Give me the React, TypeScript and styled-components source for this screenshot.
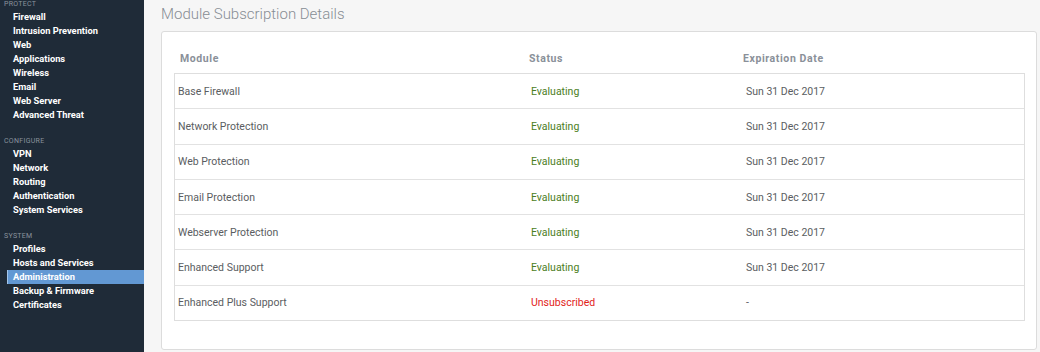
import React from "react";
import styled, { createGlobalStyle } from "styled-components";

const GlobalStyle = createGlobalStyle`
  html, body {
    margin: 0;
    padding: 0;
    background: #f6f6f6;
    font-family: Roboto, "Liberation Sans", sans-serif;
  }
`;

type Section = { title: string; items: string[] };

const sections: Section[] = [
  {
    title: "PROTECT",
    items: [
      "Firewall",
      "Intrusion Prevention",
      "Web",
      "Applications",
      "Wireless",
      "Email",
      "Web Server",
      "Advanced Threat",
    ],
  },
  {
    title: "CONFIGURE",
    items: ["VPN", "Network", "Routing", "Authentication", "System Services"],
  },
  {
    title: "SYSTEM",
    items: [
      "Profiles",
      "Hosts and Services",
      "Administration",
      "Backup & Firmware",
      "Certificates",
    ],
  },
];

type Status = "ok" | "none";

const modules: { name: string; status: string; kind: Status; date: string }[] = [
  { name: "Base Firewall", status: "Evaluating", kind: "ok", date: "Sun 31 Dec 2017" },
  { name: "Network Protection", status: "Evaluating", kind: "ok", date: "Sun 31 Dec 2017" },
  { name: "Web Protection", status: "Evaluating", kind: "ok", date: "Sun 31 Dec 2017" },
  { name: "Email Protection", status: "Evaluating", kind: "ok", date: "Sun 31 Dec 2017" },
  { name: "Webserver Protection", status: "Evaluating", kind: "ok", date: "Sun 31 Dec 2017" },
  { name: "Enhanced Support", status: "Evaluating", kind: "ok", date: "Sun 31 Dec 2017" },
  { name: "Enhanced Plus Support", status: "Unsubscribed", kind: "none", date: "-" },
];

const Shell = styled.div`
  display: flex;
  width: 1040px;
  height: 352px;
  overflow: hidden;
`;

const Sidebar = styled.nav`
  width: 144px;
  flex-shrink: 0;
  background: #1f2b38;
`;

const SectionTitle = styled.div<{ $first?: boolean }>`
  font-size: 7px;
  color: #8a939d;
  letter-spacing: 0.3px;
  height: 10px;
  line-height: 9px;
  padding-left: 4px;
  margin-top: ${(p) => (p.$first ? "0" : "15px")};
`;

const NavItem = styled.div<{ $active?: boolean }>`
  height: 14px;
  line-height: 13px;
  font-size: 9.3px;
  font-weight: 700;
  color: #ffffff;
  margin-left: 7px;
  padding-left: 6px;
  background: ${(p) => (p.$active ? "#6298d3" : "transparent")};
  box-shadow: ${(p) => (p.$active ? "inset 1px 0 0 #a3c5ea" : "none")};
  white-space: nowrap;
`;

const Main = styled.main`
  flex: 1;
  padding: 0 3px 2px 17px;
  display: flex;
  flex-direction: column;
`;

const PageTitle = styled.h1`
  margin: 0;
  flex-shrink: 0;
  height: 31px;
  line-height: 28px;
  font-size: 15px;
  font-weight: 300;
  color: #878d94;
`;

const Card = styled.section`
  flex: 1;
  min-height: 0;
  background: #fff;
  border: 1px solid #dcdcdc;
  border-radius: 3px;
  padding: 0 11px 0 12px;
`;

const HeadRow = styled.div`
  display: grid;
  grid-template-columns: 349px 214px 1fr;
  height: 41px;
  align-items: center;
`;

const HeadCell = styled.div`
  font-size: 10.5px;
  font-weight: 700;
  color: #8a9099;
  letter-spacing: 0.6px;
  padding-left: 6px;
  padding-top: 11px;
`;

const Table = styled.div`
  border: 1px solid #dedede;
`;

const Row = styled.div`
  display: grid;
  grid-template-columns: 353px 215px 1fr;
  height: 34.3px;
  align-items: center;
  & + & {
    border-top: 1px solid #e2e2e2;
  }
`;

const Cell = styled.div`
  font-size: 10.5px;
  color: #5a5d61;
  padding-left: 3px;
`;

const StatusCell = styled(Cell)<{ $kind: Status }>`
  color: ${(p) => (p.$kind === "ok" ? "#4b7d23" : "#e2231a")};
`;

export default function App() {
  return (
    <>
      <GlobalStyle />
      <Shell>
        <Sidebar>
          {sections.map((s, i) => (
            <div key={s.title}>
              <SectionTitle $first={i === 0}>{s.title}</SectionTitle>
              {s.items.map((it) => (
                <NavItem key={it} $active={it === "Administration"}>
                  {it}
                </NavItem>
              ))}
            </div>
          ))}
        </Sidebar>
        <Main>
          <PageTitle>Module Subscription Details</PageTitle>
          <Card>
            <HeadRow>
              <HeadCell>Module</HeadCell>
              <HeadCell>Status</HeadCell>
              <HeadCell>Expiration Date</HeadCell>
            </HeadRow>
            <Table>
              {modules.map((m) => (
                <Row key={m.name}>
                  <Cell>{m.name}</Cell>
                  <StatusCell $kind={m.kind}>{m.status}</StatusCell>
                  <Cell>{m.date}</Cell>
                </Row>
              ))}
            </Table>
          </Card>
        </Main>
      </Shell>
    </>
  );
}
